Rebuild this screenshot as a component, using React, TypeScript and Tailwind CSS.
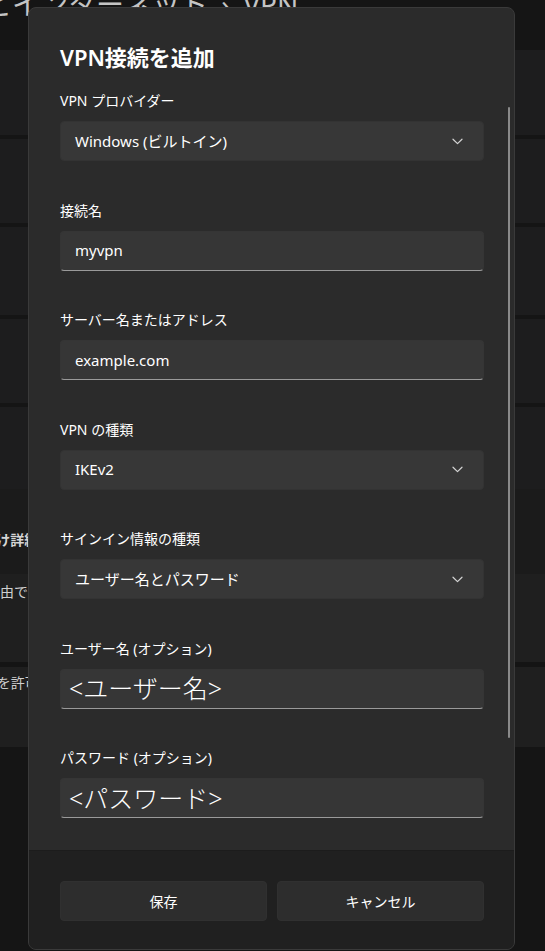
const font = "font-['Noto_Sans','Noto_Sans_CJK_JP',sans-serif]";

function Chevron() {
  return (
    <svg width="11" height="7" viewBox="0 0 11 7" fill="none">
      <path d="M1 1.2 L5.5 5.6 L10 1.2" stroke="#d4d4d4" strokeWidth="1.2" strokeLinecap="round" strokeLinejoin="round" />
    </svg>
  );
}

function Select({ value }: { value: string }) {
  return (
    <div className="flex h-[40px] items-center justify-between rounded-[4px] border border-[#333333] bg-[#373737] pl-[14px] pr-[20px]">
      <span className="text-[15px] text-[#ffffff]">{value}</span>
      <Chevron />
    </div>
  );
}

function TextBox({ value, big }: { value: string; big?: boolean }) {
  return (
    <div
      className={
        big
          ? "flex h-[40px] items-center rounded-[4px] border border-[#353535] border-b-[#9a9a9a] bg-[#363636] pl-[8px]"
          : "flex h-[40px] items-center rounded-[4px] border border-[#353535] border-b-[#9a9a9a] bg-[#363636] pl-[14px]"
      }
    >
      <span className={big ? "text-[25px] font-light leading-none text-[#ffffff]" : "text-[15px] text-[#ffffff]"}>{value}</span>
    </div>
  );
}

function Field({ label, children }: { label: string; children: React.ReactNode }) {
  return (
    <div className="flex flex-col gap-[10px]">
      <div className="text-[14px] leading-5 text-[#ffffff]">{label}</div>
      {children}
    </div>
  );
}

function Card({ h }: { h: string }) {
  return <div className={`${h} bg-[#1d1d1e]`} />;
}

export default function App() {
  return (
    <div className={`${font} relative h-[951px] w-[545px] overflow-hidden bg-[#151515]`}>
      {/* settings page behind the dialog */}
      <div className="flex h-[50px] items-start overflow-hidden">
        <div className="-mt-[17px] ml-[-184px] whitespace-nowrap text-[28px] text-[#c4c4c4]">
          ネットワークとインターネット <span className="mx-[6px]">›</span> VPN
        </div>
      </div>
      <div className="flex flex-col gap-[4px]">
        <Card h="h-[85px]" />
        <Card h="h-[84px]" />
        <Card h="h-[88px]" />
        <Card h="h-[84px]" />
        <Card h="h-[82px]" />
      </div>
      <div className="flex h-[85px] items-end bg-[#1b1b1b] pb-[24px]">
        <span className="ml-[-136px] whitespace-nowrap text-[14px] font-semibold text-[#d6d6d6]">すべての VPN 接続向け詳細設定</span>
      </div>
      <div className="flex flex-col gap-[5px] bg-[#141414]">
        <div className="flex h-[88px] items-start bg-[#1f1f1f] pt-[7px]">
          <span className="ml-[-112px] whitespace-nowrap text-[14px] text-[#cfcfcf]">従量制課金接続経由での VPN を許可</span>
        </div>
        <div className="flex h-[80px] items-start bg-[#1f1f1f] pt-[5px]">
          <span className="ml-[-136px] whitespace-nowrap text-[14px] text-[#cfcfcf]">ローミング中の VPN を許可</span>
        </div>
      </div>

      {/* dialog */}
      <div className="absolute left-[28px] top-[7px] flex h-[943px] w-[487px] flex-col overflow-hidden rounded-[8px] border border-[#3a3a3a] bg-[#2b2b2b]">
        <div className="relative flex flex-1 flex-col pl-[31px] pr-[30px] pt-[35px]">
          <h2 className="text-[22px] font-semibold leading-[28px] text-[#ffffff]">VPN接続を追加</h2>
          <div className="mt-[20px] flex flex-col gap-[39.5px]">
            <Field label="VPN プロバイダー">
              <Select value="Windows (ビルトイン)" />
            </Field>
            <Field label="接続名">
              <TextBox value="myvpn" />
            </Field>
            <Field label="サーバー名またはアドレス">
              <TextBox value="example.com" />
            </Field>
            <Field label="VPN の種類">
              <Select value="IKEv2" />
            </Field>
            <Field label="サインイン情報の種類">
              <Select value="ユーザー名とパスワード" />
            </Field>
            <Field label="ユーザー名 (オプション)">
              <TextBox value="<ユーザー名>" big />
            </Field>
            <Field label="パスワード (オプション)">
              <TextBox value="<パスワード>" big />
            </Field>
          </div>
          {/* scrollbar */}
          <div className="absolute right-[4px] top-[99px] h-[631px] w-[2px] rounded-full bg-[#8a8a8a]" />
        </div>
        <div className="flex h-[99px] gap-[10px] border-t border-[#1c1c1c] bg-[#202020] pl-[31px] pr-[30px] pt-[30px]">
          <button className="flex h-[40px] flex-1 items-center justify-center rounded-[4px] border border-[#303030] bg-[#2d2d2d] text-[14px] text-[#ffffff]">
            保存
          </button>
          <button className="flex h-[40px] flex-1 items-center justify-center rounded-[4px] border border-[#303030] bg-[#2d2d2d] text-[14px] text-[#ffffff]">
            キャンセル
          </button>
        </div>
      </div>
    </div>
  );
}
